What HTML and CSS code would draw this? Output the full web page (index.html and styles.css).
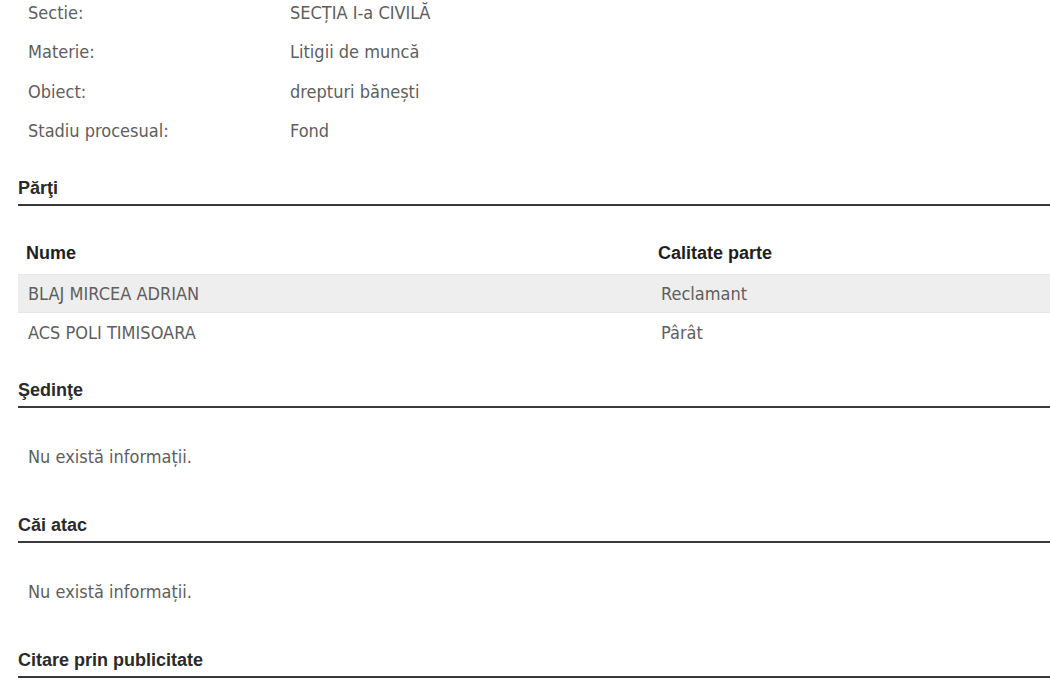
FILE: index.html
```html
<!DOCTYPE html>
<html lang="ro">
<head>
    <meta charset="UTF-8">
    <meta name="viewport" content="width=device-width, initial-scale=1.0">
    <title>Dosar</title>
    <link rel="stylesheet" href="styles.css">
</head>
<body>
    <div class="page">
        <div class="details">
            <div class="detail-row"><span class="label">Sectie:</span><span class="value">SECȚIA I-a CIVILĂ</span></div>
            <div class="detail-row"><span class="label">Materie:</span><span class="value">Litigii de muncă</span></div>
            <div class="detail-row"><span class="label">Obiect:</span><span class="value">drepturi bănești</span></div>
            <div class="detail-row"><span class="label">Stadiu procesual:</span><span class="value">Fond</span></div>
        </div>

        <h3 class="section-title">Părţi</h3>
        <table class="parties">
            <thead>
                <tr>
                    <th class="col-name">Nume</th>
                    <th>Calitate parte</th>
                </tr>
            </thead>
            <tbody>
                <tr class="alt">
                    <td>BLAJ MIRCEA ADRIAN</td>
                    <td class="col-role">Reclamant</td>
                </tr>
                <tr>
                    <td>ACS POLI TIMISOARA</td>
                    <td class="col-role">Pârât</td>
                </tr>
            </tbody>
        </table>

        <h3 class="section-title">Şedinţe</h3>
        <p class="empty">Nu există informații.</p>

        <h3 class="section-title">Căi atac</h3>
        <p class="empty">Nu există informații.</p>

        <h3 class="section-title">Citare prin publicitate</h3>
    </div>
</body>
</html>
```

FILE: styles.css
```css
/* pagina dosar */
body {
    margin: 0;
    padding: 0;
    background-color: #fff;
    font-family: "DejaVu Sans Condensed", "DejaVu Sans", sans-serif;
    font-size: 18px;
    color: #5e5e5e;
}

.page {
    padding-left: 18px;
}

.details {
    margin-top: -7px;
    margin-bottom: -1px;
}

.detail-row {
    display: grid;
    grid-template-columns: 262px auto;
    padding: 9px 0 9px 10px;
    line-height: 21.4px;
}

.section-title {
    margin: 28.5px 0 0 0;
    padding-bottom: 4.5px;
    font-family: "Liberation Sans", Arial, sans-serif;
    font-size: 18px;
    font-weight: bold;
    line-height: 21px;
    color: #2a2a2a;
    border-bottom: 2px solid #3a3a3a;
}

.parties {
    width: 100%;
    margin-top: 27px;
    border-collapse: collapse;
}

.parties th {
    padding: 10px 8px 10px;
    text-align: left;
    font-family: "Liberation Sans", Arial, sans-serif;
    font-size: 18px;
    line-height: 21px;
    color: #1e1e1e;
}

.parties .col-name {
    width: 616px;
}

.parties td {
    padding: 9px 10px;
    line-height: 21px;
}

.parties td.col-role {
    padding-left: 11px;
}

.parties tr.alt td {
    background-color: #eeeeee;
    border-top: 1px solid #e6e6e6;
    border-bottom: 1px solid #e6e6e6;
    padding-top: 8px;
    padding-bottom: 8px;
}

.empty {
    margin: 0;
    padding: 38px 10px 20px;
    line-height: 21px;
}
```
